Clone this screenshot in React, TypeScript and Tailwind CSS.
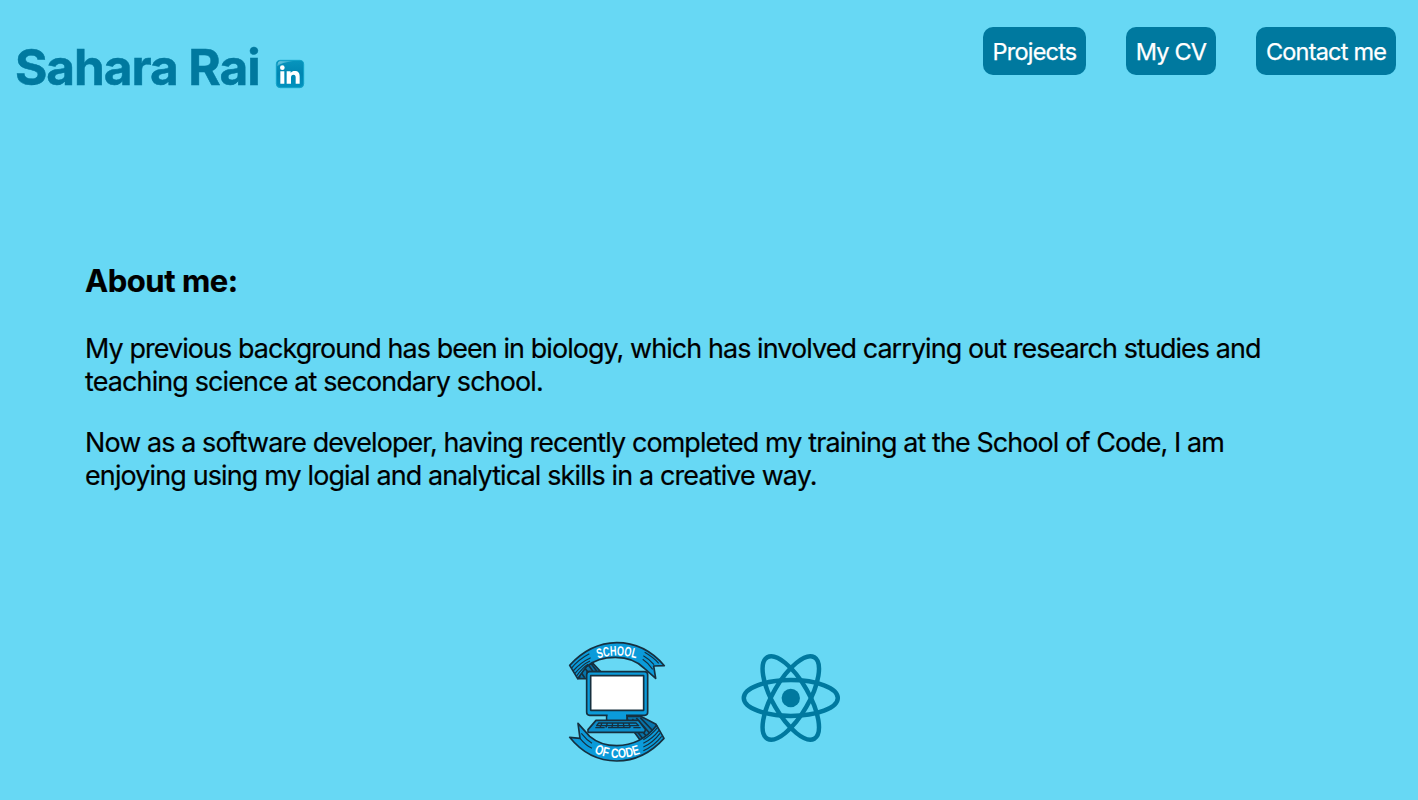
import React from "react";

function LinkedInIcon() {
  return (
    <svg className="block h-[30px] w-[30px]" viewBox="0 0 90 90">
      <defs>
        <linearGradient id="li" x1="0" y1="0" x2="0" y2="1">
          <stop offset="0" stopColor="#0795bd" />
          <stop offset="0.5" stopColor="#0086b2" />
          <stop offset="1" stopColor="#0092be" />
        </linearGradient>
        <linearGradient id="gloss" x1="0" y1="0" x2="1" y2="1">
          <stop offset="0" stopColor="#8edcf0" stopOpacity="0.9" />
          <stop offset="1" stopColor="#2ba9cc" stopOpacity="0.2" />
        </linearGradient>
      </defs>
      <rect x="4" y="4" width="82" height="82" rx="12" fill="url(#li)" stroke="#12a3c9" strokeWidth="3" />
      <path d="M7 22q0-15 9-15h38Q20 10 7 22Z" fill="url(#gloss)" />
      <circle cx="22" cy="26" r="7" fill="#fff" />
      <path d="M16 37h12v37H16zM35 37h12v5c3-4 7-6 12-6 11 0 15 6 15 16v22H62V55c0-5-2-8-6-8-6 0-8 3-8 9v18H35z" fill="#fff" />
    </svg>
  );
}

function SchoolOfCodeLogo() {
  return (
    <svg className="block h-[129px] w-[115px]" viewBox="0 0 345 387" stroke="#16303f" strokeWidth="5" strokeLinejoin="round">
      <defs>
        <path id="top" d="M114 71Q170 52 232 71" />
        <path id="bottom" d="M102 354Q170 383 245 355" />
      </defs>
      <path d="M54 131h28v-21h40L98 84 60 104z" fill="#0875ac" />
      <path d="M60 128l-4-10M74 128L58 104M84 112L72 96M98 108L84 88M110 108L92 84" fill="none" strokeWidth="5" />
      <path d="M29 91Q90 24 170 23q84 0 143 69l-32 1 6 37-33-29Q222 67 166 67 112 67 79 95L53 131z" fill="#0b9bda" />
      <path d="M34 100Q54 74 88 56M39 108Q62 82 92 68M44 116Q68 88 90 78M49 124Q68 98 84 88M254 52q26 15 42 33M250 62q18 10 32 27M248 73q18 12 30 30" fill="none" strokeWidth="3.5" />
      <path d="M200 244h42l46 24 5 14-40 50-46-62z" fill="#0875ac" />
      <path d="M205 256l46 58M217 252l44 54M229 249l42 48M241 248l38 40" fill="none" strokeWidth="5" />
      <path d="M140 240h61v18h-61z" fill="#0b9bda" />
      <rect x="80" y="110" width="183" height="131" rx="9" fill="#0b9bda" />
      <rect x="92" y="122" width="159" height="104" fill="#fff" />
      <path d="M143 236h55v18h-55z" fill="#0b9bda" stroke="none" />
      <path d="M108 256h127l22 28-4 8H84v-8z" fill="#0b8ecb" />
      <path d="M116 264h112l8 8H110zM106 278h28M144 278h66M220 278h22M126 264l-6 14M142 264l-4 14M158 264l-2 14M174 264v14M190 264l2 14M206 264l5 14" fill="none" strokeWidth="4" />
      <path d="M29 307l31 3-6-45 35 39q33 28 81 28 72 0 120-61l22 39q-60 67-142 68-84 0-141-71z" fill="#0b9bda" />
      <path d="M60 310q18 22 36 30M64 295q16 20 32 30M250 314q24-14 43-37M250 325q28-14 47-39M250 336q29-13 50-41M250 347q32-14 55-43" fill="none" strokeWidth="3.5" />
      <g fill="#fff" stroke="none" fontFamily="'Liberation Sans Narrow', 'Liberation Sans', sans-serif" fontWeight="700" fontSize="41">
        <text><textPath href="#top" textLength="116" lengthAdjust="spacingAndGlyphs">SCHOOL</textPath></text>
        <text><textPath href="#bottom" textLength="143" lengthAdjust="spacingAndGlyphs">OF CODE</textPath></text>
      </g>
    </svg>
  );
}

function ReactLogo() {
  return (
    <svg className="block h-[90px] w-[100px]" viewBox="-11.65 -10.53 23.4 21.06">
      <circle r="2.15" fill="#00799f" />
      <g fill="none" stroke="#00799f" strokeWidth="1.05">
        <ellipse rx="11" ry="4.2" />
        <ellipse rx="11" ry="4.2" transform="rotate(60)" />
        <ellipse rx="11" ry="4.2" transform="rotate(120)" />
      </g>
    </svg>
  );
}

const button = "flex h-12 items-center justify-center rounded-[10px] bg-[#00799f] pt-0.5 text-[23.5px] whitespace-nowrap text-white [-webkit-text-stroke:0.25px_white]";

export default function App() {
  return (
    <div className="flex h-[800px] w-full flex-col overflow-hidden bg-[#67d8f4] font-['Inter',sans-serif] text-black">
      <header className="flex h-[110px] justify-between pr-[22px] pl-[15px]">
        <div className="flex pt-[37px]">
          <h1 className="w-[260px] text-[49.5px] leading-[60px] font-bold tracking-[-1.05px] whitespace-nowrap text-[#00799f] [-webkit-text-stroke:0.5px_#00799f]">Sahara Rai</h1>
          <div className="pt-[22px]"><LinkedInIcon /></div>
        </div>
        <nav className="flex gap-10 pt-[27px]">
          <button className={`${button} w-[103px] tracking-[-0.8px]`}>Projects</button>
          <button className={`${button} w-[90px] tracking-[-0.8px]`}>My CV</button>
          <button className={`${button} w-[140px] tracking-[-0.8px]`}>Contact me</button>
        </nav>
      </header>
      <main className="h-[525px] pt-[151px] pl-[85px] text-[26.9px] leading-[33px] whitespace-nowrap [-webkit-text-stroke:0.2px_black]">
        <h2 className="text-[31px] leading-10 font-bold tracking-[-0.45px]">About me:</h2>
        <p className="mt-[31px]">
          <span className="tracking-[-0.9px]">My previous background has been in biology, which has involved carrying out research studies and</span>
          <br />
          <span className="tracking-[-0.84px]">teaching science at secondary school.</span>
        </p>
        <p className="mt-7">
          <span className="tracking-[-0.88px]">Now as a software developer, having recently completed my training at the School of Code, I am</span>
          <br />
          <span className="tracking-[-0.84px]">enjoying using my logial and analytical skills in a creative way.</span>
        </p>
      </main>
      <footer className="flex gap-[66px] pl-[560px]">
        <SchoolOfCodeLogo />
        <div className="pt-[18px]"><ReactLogo /></div>
      </footer>
    </div>
  );
}
